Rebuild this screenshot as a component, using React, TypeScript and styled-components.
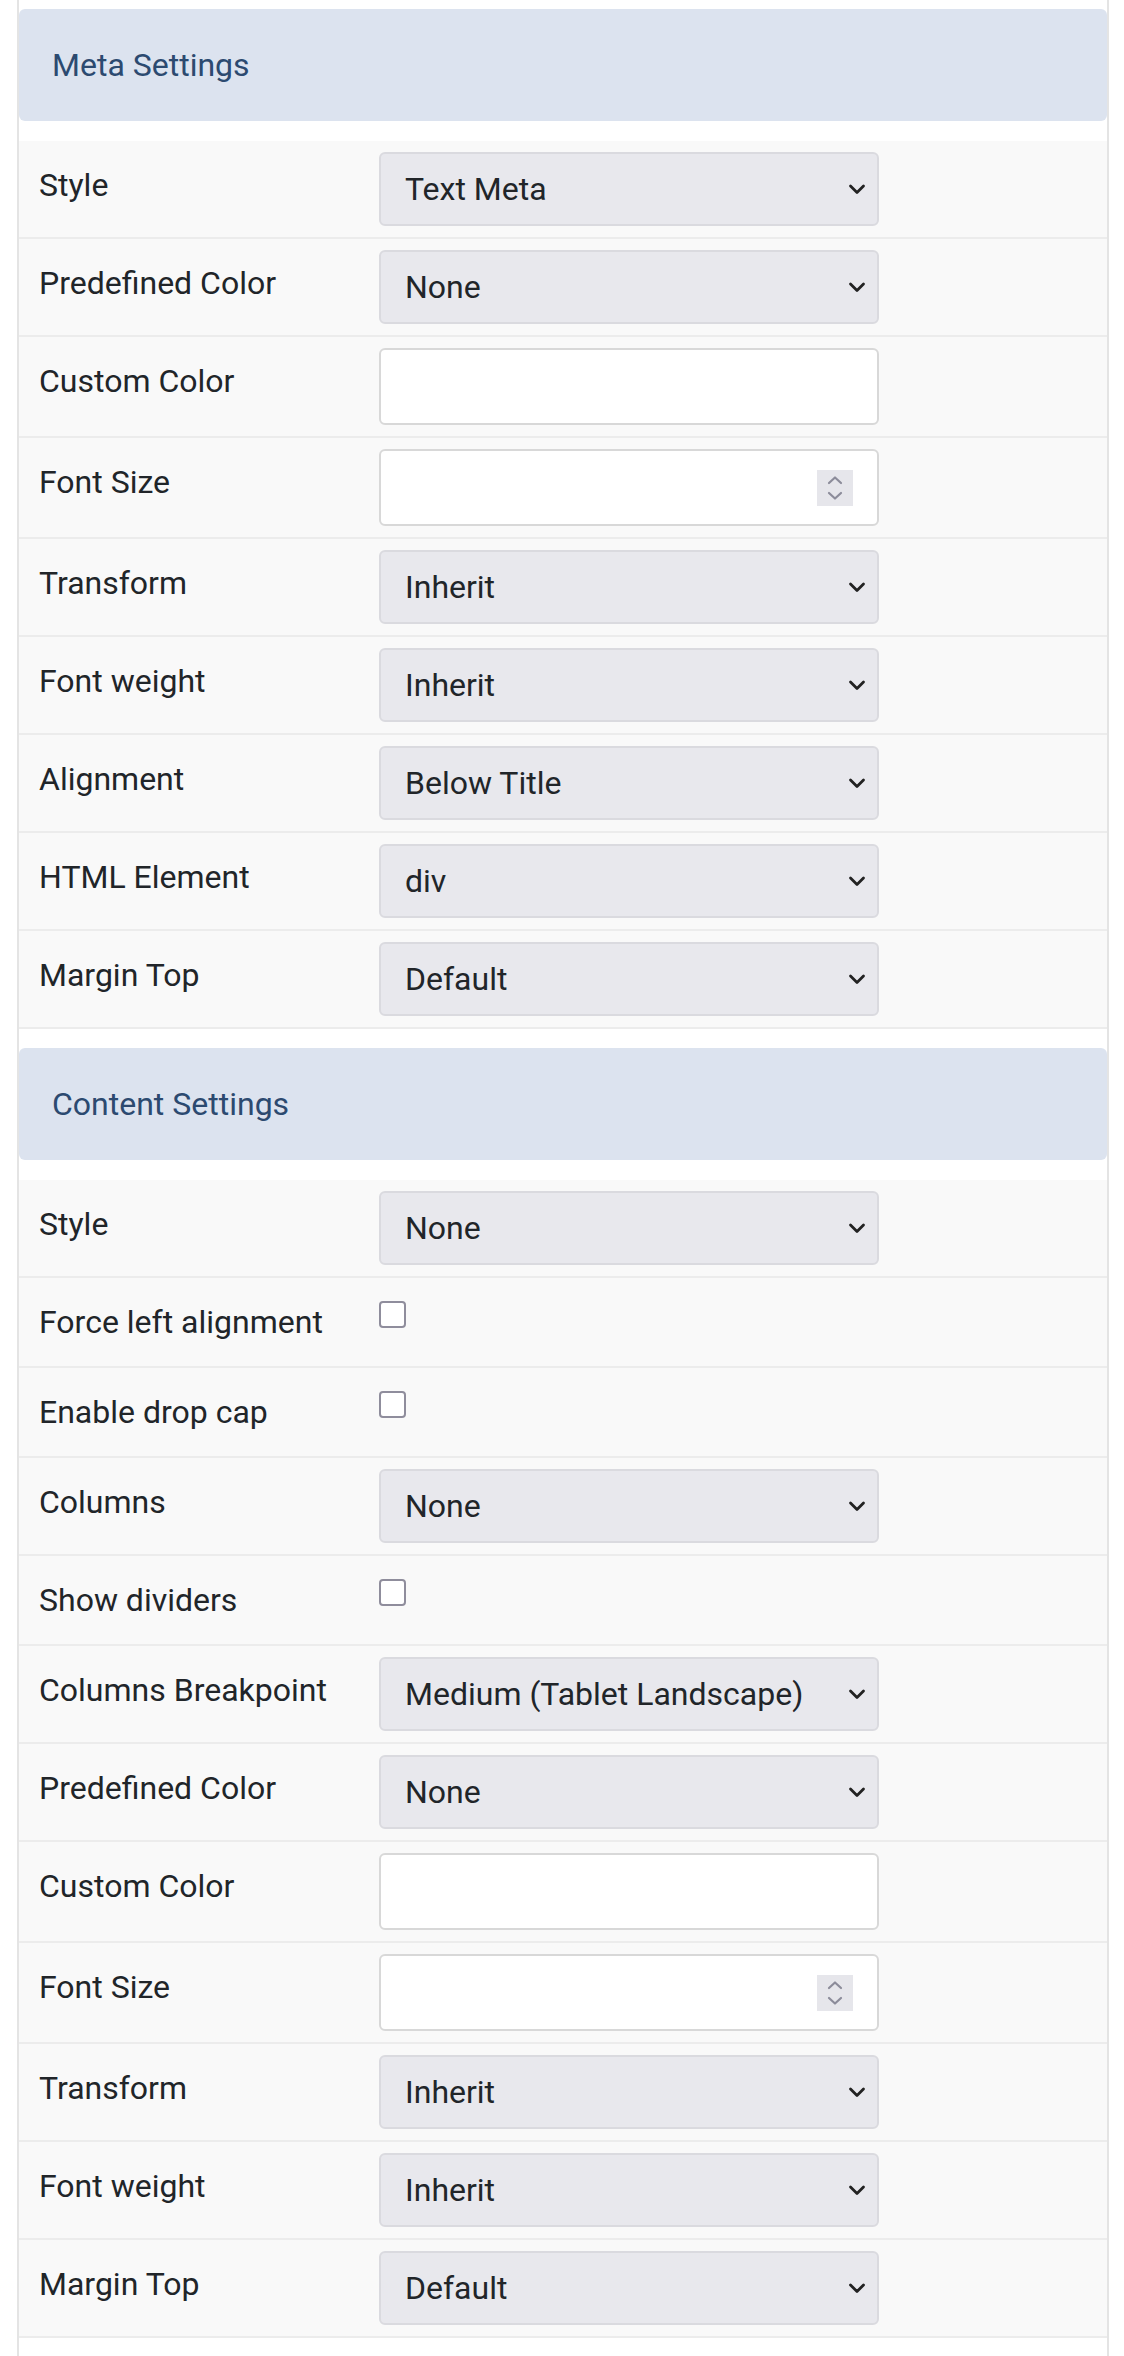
import React from "react";
import styled, { createGlobalStyle } from "styled-components";

const Global = createGlobalStyle`
  html, body { margin: 0; padding: 0; background: #ffffff; }
  body { font-family: Roboto, "Noto Sans", "Liberation Sans", sans-serif; }
  * { box-sizing: border-box; }
`;

const Panel = styled.div`
  margin-left: 17px;
  width: 1092px;
  border-left: 2px solid #e4e4e4;
  border-right: 2px solid #e4e4e4;
  padding-top: 9px;
  min-height: 2356px;
`;

const Section = styled.section`
  & + & { margin-top: 19px; }
`;

const Header = styled.div`
  height: 112px;
  background: #dce3ef;
  border-radius: 6px;
  display: flex;
  align-items: center;
  padding-left: 33px;
  margin-bottom: 20px;
  font-size: 32px;
  color: #2c4a70;
`;

const Row = styled.div`
  display: grid;
  grid-template-columns: 360px 1fr;
  align-items: start;
  background: #f9f9f9;
  border-bottom: 2px solid #ececec;
`;

const Label = styled.div`
  padding: 20px 0 20px 20px;
  font-size: 32px;
  line-height: 48px;
  color: #212529;
`;

const Control = styled.div`
  padding: 11px 0;
`;

const SelectBox = styled.div`
  width: 500px;
  height: 74px;
  background: #e8e8ed;
  border: 2px solid #dadadf;
  border-radius: 6px;
  display: flex;
  align-items: center;
  justify-content: space-between;
  padding: 0 10px 0 24px;
  font-size: 32px;
  color: #212529;
`;

const TextInput = styled.div<{ $number?: boolean }>`
  width: 500px;
  height: 77px;
  background: #ffffff;
  border: 2px solid #d8d8d8;
  border-radius: 6px;
  display: flex;
  align-items: center;
  justify-content: flex-end;
  padding-right: 24px;
`;

const Spinner = styled.div`
  width: 36px;
  height: 36px;
  background: #e6e6eb;
  display: flex;
  align-items: center;
  justify-content: center;
`;

const Check = styled.input.attrs({ type: "checkbox" })`
  appearance: none;
  -webkit-appearance: none;
  display: block;
  margin: 12px 0 0 0;
  width: 27px;
  height: 27px;
  border: 2.5px solid #8f8d9c;
  border-radius: 4px;
  background: #ffffff;
`;

const Chevron = () => (
  <svg width="20" height="14" viewBox="0 0 20 14">
    <path d="M3.5 4 L10 10.5 L16.5 4" fill="none" stroke="#222" strokeWidth="2.8" strokeLinecap="round" strokeLinejoin="round" />
  </svg>
);

const SpinIcon = () => (
  <svg width="18" height="30" viewBox="0 0 18 30">
    <path d="M3 10 L9 4.5 L15 10" fill="none" stroke="#8c8c9a" strokeWidth="2.2" strokeLinecap="round" strokeLinejoin="round" />
    <path d="M3 20 L9 25.5 L15 20" fill="none" stroke="#8c8c9a" strokeWidth="2.2" strokeLinecap="round" strokeLinejoin="round" />
  </svg>
);

type Field =
  | { label: string; kind: "select"; value: string }
  | { label: string; kind: "text" }
  | { label: string; kind: "number" }
  | { label: string; kind: "check" };

const meta: Field[] = [
  { label: "Style", kind: "select", value: "Text Meta" },
  { label: "Predefined Color", kind: "select", value: "None" },
  { label: "Custom Color", kind: "text" },
  { label: "Font Size", kind: "number" },
  { label: "Transform", kind: "select", value: "Inherit" },
  { label: "Font weight", kind: "select", value: "Inherit" },
  { label: "Alignment", kind: "select", value: "Below Title" },
  { label: "HTML Element", kind: "select", value: "div" },
  { label: "Margin Top", kind: "select", value: "Default" },
];

const content: Field[] = [
  { label: "Style", kind: "select", value: "None" },
  { label: "Force left alignment", kind: "check" },
  { label: "Enable drop cap", kind: "check" },
  { label: "Columns", kind: "select", value: "None" },
  { label: "Show dividers", kind: "check" },
  { label: "Columns Breakpoint", kind: "select", value: "Medium (Tablet Landscape)" },
  { label: "Predefined Color", kind: "select", value: "None" },
  { label: "Custom Color", kind: "text" },
  { label: "Font Size", kind: "number" },
  { label: "Transform", kind: "select", value: "Inherit" },
  { label: "Font weight", kind: "select", value: "Inherit" },
  { label: "Margin Top", kind: "select", value: "Default" },
];

const FieldControl = ({ f }: { f: Field }) => {
  switch (f.kind) {
    case "select":
      return (
        <SelectBox>
          <span>{f.value}</span>
          <Chevron />
        </SelectBox>
      );
    case "text":
      return <TextInput />;
    case "number":
      return (
        <TextInput $number>
          <Spinner>
            <SpinIcon />
          </Spinner>
        </TextInput>
      );
    case "check":
      return <Check readOnly />;
  }
};

const Group = ({ title, fields }: { title: string; fields: Field[] }) => (
  <Section>
    <Header>{title}</Header>
    {fields.map((f, i) => (
      <Row key={i}>
        <Label>{f.label}</Label>
        <Control>
          <FieldControl f={f} />
        </Control>
      </Row>
    ))}
  </Section>
);

export default function App() {
  return (
    <>
      <Global />
      <Panel>
        <Group title="Meta Settings" fields={meta} />
        <Group title="Content Settings" fields={content} />
      </Panel>
    </>
  );
}
